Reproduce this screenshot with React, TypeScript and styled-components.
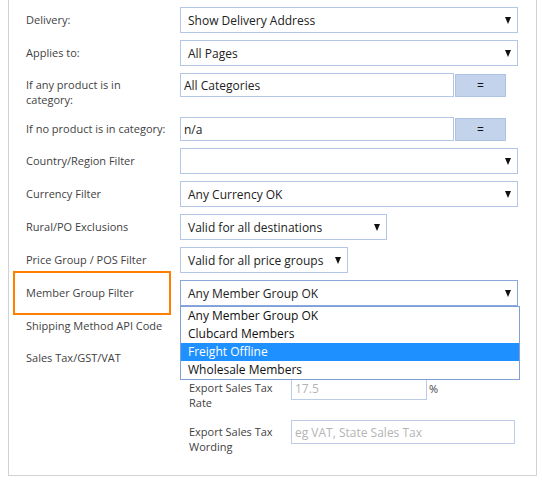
import React from "react";
import styled, { createGlobalStyle } from "styled-components";

const Global = createGlobalStyle`
  html, body { margin: 0; padding: 0; background: #fff; }
  body { font-family: "Open Sans", "Segoe UI", Arial, sans-serif; color: #333; }
  * { box-sizing: border-box; }
`;

const Panel = styled.div`
  position: relative;
  margin: 0 6px 0 8px;
  width: 529px;
  height: 476px;
  border: 1px solid #d2d2d2;
  border-top: none;
  background: #fff;
  padding: 7px 0 0 17px;
`;

const Row = styled.div<{ $h: number }>`
  display: grid;
  grid-template-columns: 154px 1fr;
  align-items: start;
  height: ${(p) => p.$h}px;
`;

const Label = styled.div<{ $pt?: number }>`
  font-size: 11px;
  line-height: 15px;
  color: #3f3f3f;
  padding-top: ${(p) => p.$pt ?? 5}px;
  white-space: nowrap;
`;

const Highlight = styled.div`
  position: absolute;
  left: 4px;
  top: 271px;
  width: 158px;
  height: 44px;
  border: 2px solid #ff8000;
`;

const SelectBox = styled.div<{ $w: number; $focus?: boolean }>`
  width: ${(p) => p.$w}px;
  height: 26px;
  border: 1px solid ${(p) => (p.$focus ? "#8aa8dc" : "#b3c6e6")};
  background: #fff;
  display: flex;
  align-items: center;
  justify-content: space-between;
  padding: 0 6px 0 7px;
  font-size: 12px;
  color: #222;
`;

const Arrow = styled.span`
  width: 0;
  height: 0;
  border-left: 3.5px solid transparent;
  border-right: 3.5px solid transparent;
  border-top: 7px solid #111;
`;

const InputRow = styled.div`
  display: flex;
  align-items: flex-start;
  gap: 1px;
`;

const TextBox = styled.div<{ $w: number; $muted?: boolean; $h?: number }>`
  width: ${(p) => p.$w}px;
  height: ${(p) => p.$h ?? 24}px;
  border: 1px solid ${(p) => (p.$muted ? "#bccbe8" : "#b3c6e6")};
  background: #fff;
  display: flex;
  align-items: center;
  padding: 0 3px;
  font-size: 12px;
  color: ${(p) => (p.$muted ? "#b4b4b4" : "#222")};
`;

const EqButton = styled.div`
  width: 51px;
  height: 23px;
  margin-top: 1px;
  background: #c3d3ec;
  border: 1px solid #aec3e3;
  display: flex;
  align-items: center;
  justify-content: center;
  font-size: 12px;
  color: #111;
`;

const Sub = styled.div`
  display: grid;
  grid-template-columns: 102px 1fr;
  align-items: start;
  padding-left: 9px;
`;

const SubField = styled.div`
  display: flex;
  align-items: center;
  gap: 2px;
  font-size: 11px;
  color: #444;
`;

const Dropdown = styled.div`
  position: absolute;
  left: 171px;
  top: 306px;
  width: 340px;
  border: 1px solid #7f9fd6;
  background: #fff;
  z-index: 2;
`;

const Option = styled.div<{ $active?: boolean }>`
  height: 18px;
  line-height: 18px;
  padding-left: 7px;
  font-size: 12px;
  color: ${(p) => (p.$active ? "#fff" : "#111")};
  background: ${(p) => (p.$active ? "#1e90ff" : "#fff")};
`;

const Select = ({ w, value, focus }: { w: number; value: string; focus?: boolean }) => (
  <SelectBox $w={w} $focus={focus}>
    <span>{value}</span>
    <Arrow />
  </SelectBox>
);

export default function App() {
  return (
    <>
      <Global />
      <Panel>
        <Row $h={33}>
          <Label>Delivery:</Label>
          <Select w={338} value="Show Delivery Address" />
        </Row>
        <Row $h={33}>
          <Label>Applies to:</Label>
          <Select w={338} value="All Pages" />
        </Row>
        <Row $h={44}>
          <Label $pt={4}>
            If any product is in
            <br />
            category:
          </Label>
          <InputRow>
            <TextBox $w={274}>All Categories</TextBox>
            <EqButton>=</EqButton>
          </InputRow>
        </Row>
        <Row $h={31}>
          <Label $pt={4}>If no product is in category:</Label>
          <InputRow>
            <TextBox $w={274}>n/a</TextBox>
            <EqButton>=</EqButton>
          </InputRow>
        </Row>
        <Row $h={33}>
          <Label>Country/Region Filter</Label>
          <Select w={338} value="" />
        </Row>
        <Row $h={33}>
          <Label>Currency Filter</Label>
          <Select w={338} value="Any Currency OK" />
        </Row>
        <Row $h={33}>
          <Label>Rural/PO Exclusions</Label>
          <Select w={207} value="Valid for all destinations" />
        </Row>
        <Row $h={33}>
          <Label>Price Group / POS Filter</Label>
          <Select w={168} value="Valid for all price groups" />
        </Row>
        <Row $h={33}>
          <Label>Member Group Filter</Label>
          <Select w={338} value="Any Member Group OK" focus />
        </Row>
        <Row $h={32}>
          <Label>Shipping Method API Code</Label>
          <TextBox $w={200} $h={26} />
        </Row>
        <Row $h={31}>
          <Label>Sales Tax/GST/VAT</Label>
          <Select w={200} value="" />
        </Row>
        <Row $h={44}>
          <span />
          <Sub>
            <Label $pt={4}>
              Export Sales Tax
              <br />
              Rate
            </Label>
            <SubField>
              <TextBox $w={136} $muted>17.5</TextBox>
              <span>%</span>
            </SubField>
          </Sub>
        </Row>
        <Row $h={44}>
          <span />
          <Sub>
            <Label $pt={4}>
              Export Sales Tax
              <br />
              Wording
            </Label>
            <SubField>
              <TextBox $w={224} $muted>eg VAT, State Sales Tax</TextBox>
            </SubField>
          </Sub>
        </Row>
        <Highlight />
        <Dropdown>
          <Option>Any Member Group OK</Option>
          <Option>Clubcard Members</Option>
          <Option $active>Freight Offline</Option>
          <Option>Wholesale Members</Option>
        </Dropdown>
      </Panel>
    </>
  );
}
